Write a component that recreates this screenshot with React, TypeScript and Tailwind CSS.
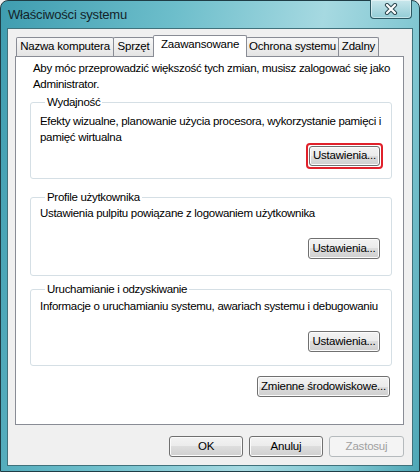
import type { ReactNode } from "react"

const font = { fontFamily: '"Liberation Sans", Arial, sans-serif' }

function VistaButton({ children, disabled = false, className = "" }: { children: ReactNode; disabled?: boolean; className?: string }) {
  return (
    <button
      type="button"
      className={`h-[21px] whitespace-nowrap rounded-[3px] border text-[11.5px] leading-none tracking-[-0.2px] shadow-[inset_0_0_0_1px_#fbfbfb] ${
        disabled
          ? "border-[#b5babd] bg-[#f4f4f4] text-[#a0a0a0] shadow-none"
          : "border-[#707070] bg-[linear-gradient(to_bottom,#f3f3f3_0%,#ebebeb_50%,#dddddd_50%,#cfcfcf_100%)] text-black"
      } ${className}`}
    >
      {children}
    </button>
  )
}

function Tab({ label, width, selected = false }: { label: string; width: string; selected?: boolean }) {
  return (
    <div
      className={`${width} -ml-px flex items-center justify-center whitespace-nowrap border border-b-0 border-[#898c95] text-[11.5px] tracking-[-0.2px] first:ml-0 ${
        selected
          ? "relative z-10 -mb-px h-[22px] rounded-t-[2px] bg-white pb-[3px]"
          : "h-[19px] rounded-t-[2px] bg-[linear-gradient(to_bottom,#f7f7f7,#e4e4e4)]"
      }`}
    >
      {label}
    </div>
  )
}

function Group({ title, className, children }: { title: string; className: string; children: ReactNode }) {
  return (
    <fieldset className={`min-w-0 rounded-[3px] border border-[#d5dfe5] px-[9px] ${className}`}>
      <legend className="ml-[5px] px-[2px] leading-[16px]">{title}</legend>
      {children}
    </fieldset>
  )
}

function CloseButton() {
  return (
    <div className="-mt-px mr-px flex h-[19px] w-[42px] items-center justify-center rounded-b-[4px] border border-t-0 border-[#2c5862] bg-[linear-gradient(to_bottom,#c9e7ec,#93cdd6)] shadow-[inset_0_0_0_1px_rgba(255,255,255,0.45)]">
      <svg width="14" height="12" viewBox="0 0 14 12">
        <path d="M3 2 L11 10 M11 2 L3 10" stroke="#2e4a52" strokeWidth="4.2" strokeLinecap="round" />
        <path d="M3 2 L11 10 M11 2 L3 10" stroke="#ffffff" strokeWidth="2.2" strokeLinecap="round" />
      </svg>
    </div>
  )
}

export default function App() {
  return (
    <div className="h-[472px] w-[420px] bg-[#f0f0f0] text-black" style={font}>
      <div className="flex h-full flex-col rounded-t-[8px] border border-[#1f3d46] bg-[linear-gradient(100deg,#3f9db0_0%,#6dbecb_35%,#a6d9e1_65%,#7fc6d1_85%,#4ea7b6_100%)] px-[6px] pb-[5px]">
        {/* title bar */}
        <div className="flex h-[27px] items-start justify-between">
          <span className="pl-[1px] pt-[5px] text-[13px] leading-[18px] tracking-[-0.2px] text-[#13242a]">Właściwości systemu</span>
          <CloseButton />
        </div>

        {/* client area */}
        <div className="flex flex-1 flex-col border border-[#40727c] bg-[#f0f0f0] pb-[8px] pl-[7px] pr-[8px] pt-[6px]">
          <div className="flex h-[21px] items-end pl-[1px]">
            <Tab label="Nazwa komputera" width="w-[98px]" />
            <Tab label="Sprzęt" width="w-[41px]" />
            <Tab label="Zaawansowane" width="w-[94px]" selected />
            <Tab label="Ochrona systemu" width="w-[93px]" />
            <Tab label="Zdalny" width="w-[41px]" />
          </div>

          <div className="flex flex-1 flex-col whitespace-nowrap border border-[#898c95] bg-white pl-[14px] pr-[11px] pt-[3px] text-[11.5px] leading-[16px] tracking-[-0.3px]">
            <p className="pl-[3px]">
              Aby móc przeprowadzić większość tych zmian, musisz zalogować się jako
              <br />
              Administrator.
            </p>

            <Group title="Wydajność" className="mt-[2px] pb-[9px]">
              <p className="pt-[3px]">
                Efekty wizualne, planowanie użycia procesora, wykorzystanie pamięci i
                <br />
                pamięć wirtualna
              </p>
              <div className="-mt-[2px] flex justify-end">
                <div className="mr-[-1px] rounded-[4px] border-2 border-[#e0212b] p-px">
                  <VistaButton className="w-[71px] !h-[20px]">Ustawienia...</VistaButton>
                </div>
              </div>
            </Group>

            <Group title="Profile użytkownika" className="mt-[10px] pb-[16px]">
              <p>Ustawienia pulpitu powiązane z logowaniem użytkownika</p>
              <div className="mt-[17px] flex justify-end pr-[2px]">
                <VistaButton className="w-[72px]">Ustawienia...</VistaButton>
              </div>
            </Group>

            <Group title="Uruchamianie i odzyskiwanie" className="mt-[5px] pb-[13px]">
              <p className="pt-px">Informacje o uruchamianiu systemu, awariach systemu i debugowaniu</p>
              <div className="mt-[17px] flex justify-end pr-[2px]">
                <VistaButton className="w-[72px]">Ustawienia...</VistaButton>
              </div>
            </Group>

            <div className="mt-[10px] flex justify-end pr-[2px]">
              <VistaButton className="w-[133px]">Zmienne środowiskowe...</VistaButton>
            </div>
          </div>

          <div className="mt-[11px] flex justify-end gap-[6px]">
            <VistaButton className="w-[74px]">OK</VistaButton>
            <VistaButton className="w-[74px]">Anuluj</VistaButton>
            <VistaButton className="w-[75px]" disabled>
              Zastosuj
            </VistaButton>
          </div>
        </div>
      </div>
    </div>
  )
}
